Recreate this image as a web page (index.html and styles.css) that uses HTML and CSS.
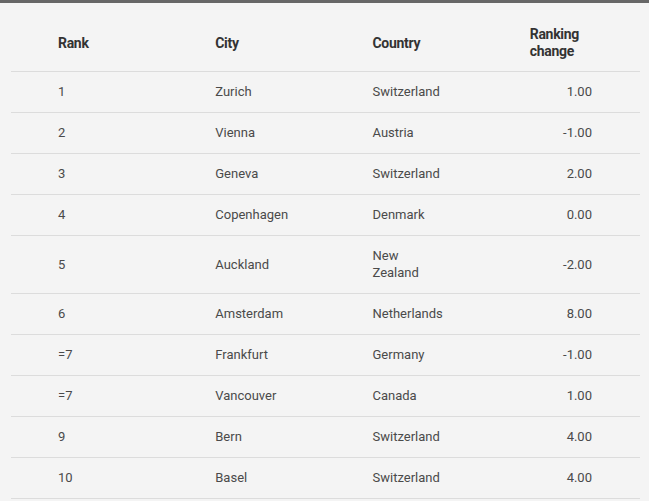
FILE: index.html
```
<!DOCTYPE html>
<html>
<head>
<meta charset="utf-8">
<link rel="stylesheet" href="styles.css">
</head>
<body>
<div class="topbar"></div>
<div class="wrap">
<table class="rank-table">
<thead>
<tr><th>Rank</th><th>City</th><th>Country</th><th class="change-head">Ranking change</th></tr>
</thead>
<tbody>
<tr><td>1</td><td>Zurich</td><td class="country">Switzerland</td><td class="num">1.00</td></tr>
<tr><td>2</td><td>Vienna</td><td class="country">Austria</td><td class="num">-1.00</td></tr>
<tr><td>3</td><td>Geneva</td><td class="country">Switzerland</td><td class="num">2.00</td></tr>
<tr><td>4</td><td>Copenhagen</td><td class="country">Denmark</td><td class="num">0.00</td></tr>
<tr><td>5</td><td>Auckland</td><td class="country">New Zealand</td><td class="num">-2.00</td></tr>
<tr><td>6</td><td>Amsterdam</td><td class="country">Netherlands</td><td class="num">8.00</td></tr>
<tr><td>=7</td><td>Frankfurt</td><td class="country">Germany</td><td class="num">-1.00</td></tr>
<tr><td>=7</td><td>Vancouver</td><td class="country">Canada</td><td class="num">1.00</td></tr>
<tr><td>9</td><td>Bern</td><td class="country">Switzerland</td><td class="num">4.00</td></tr>
<tr><td>10</td><td>Basel</td><td class="country">Switzerland</td><td class="num">4.00</td></tr>
</tbody>
</table>
</div>
</body>
</html>
```
FILE: styles.css
```
html, body {
  margin: 0;
  padding: 0;
  background: #f4f4f4;
  font-family: Roboto, "Liberation Sans", sans-serif;
}
.topbar {
  height: 3px;
  background: #676767;
}
.wrap {
  padding: 11px 9px 0 11px;
}
.rank-table {
  width: 629px;
  border-collapse: collapse;
  table-layout: fixed;
}
.rank-table th,
.rank-table td {
  text-align: left;
  vertical-align: middle;
  border-bottom: 1px solid #dcdcdc;
  padding: 11px 0 12px 47px;
  line-height: 17px;
}
.rank-table th {
  padding-top: 12px;
  padding-bottom: 11px;
  font-size: 14px;
  font-weight: 700;
  color: #333;
  letter-spacing: -0.3px;
}
.rank-table td {
  font-size: 13px;
  color: #4a4a4a;
}
.rank-table .change-head {
  padding-right: 40px;
}
.rank-table .country {
  padding-right: 48px;
}
.rank-table .num {
  text-align: right;
  padding-right: 48px;
}
```
